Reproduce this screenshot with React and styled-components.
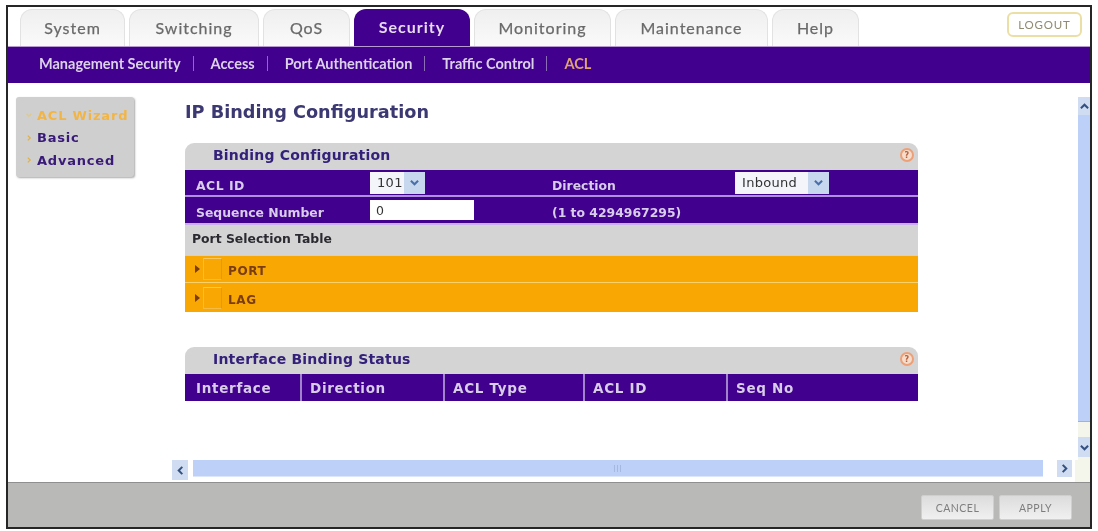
import { Fragment } from 'react';
import styled, { createGlobalStyle } from 'styled-components';

const GlobalStyle = createGlobalStyle`
  html, body {
    margin: 0;
    padding: 0;
    background: #fff;
  }
  * {
    box-sizing: border-box;
  }
`;

const PURPLE = '#42008e';
const tabFont = `Lato, "Open Sans", sans-serif`;
const bodyFont = `"DejaVu Sans", Verdana, sans-serif`;

const Page = styled.div`
  width: 1098px;
  height: 531px;
  padding: 5px 6px 2px 6px;
  filter: blur(0.5px);
`;

const Frame = styled.div`
  height: 100%;
  border: 2px solid #262626;
  display: flex;
  flex-direction: column;
  background: #fff;
`;

const TabBar = styled.div`
  height: 39px;
  padding: 2px 8px 0 12px;
  display: flex;
  align-items: flex-end;
  gap: 4px;
`;

const Tab = styled.div`
  width: ${(p) => p.$width}px;
  height: 37px;
  border-radius: 12px 12px 0 0;
  display: flex;
  align-items: center;
  justify-content: center;
  padding-bottom: 2px;
  font-family: ${tabFont};
  font-size: 16px;
  letter-spacing: 1px;
  font-weight: ${(p) => (p.$active ? 700 : 400)};
  color: ${(p) => (p.$active ? '#e6dcee' : '#6a6a6a')};
  -webkit-text-stroke: ${(p) => (p.$active ? '0' : '0.25px #6a6a6a')};
  background: ${(p) => (p.$active ? PURPLE : 'linear-gradient(#efefef, #fafafa)')};
  border: ${(p) => (p.$active ? 'none' : '1px solid #e2e2e2')};
  border-bottom: none;
`;

const Logout = styled.div`
  margin-left: auto;
  margin-bottom: 9px;
  width: 75px;
  height: 25px;
  border: 2px solid #ecdfa6;
  border-radius: 6px;
  display: flex;
  align-items: center;
  justify-content: center;
  font-family: ${tabFont};
  font-size: 11.5px;
  letter-spacing: 0.8px;
  color: #8f8a70;
`;

const SubNav = styled.div`
  height: 37px;
  background: ${PURPLE};
  border-top: 1px solid #b89ad2;
  padding: 0 0 3px 31px;
  display: flex;
  align-items: center;
  font-family: ${tabFont};
  font-size: 14.5px;
  font-weight: 700;
`;

const SubItem = styled.span`
  color: ${(p) => (p.$active ? '#dfa273' : '#dcd2e8')};
`;

const SubDivider = styled.span`
  width: 1px;
  height: 15px;
  margin: 0 17px 0 12px;
  background: #8d6db5;
`;

const Main = styled.div`
  flex: 1;
  min-height: 0;
  display: flex;
  padding-left: 8px;
`;

const SideMenu = styled.div`
  width: 118px;
  height: 80px;
  margin-top: 14px;
  padding: 8.5px 0 0 10px;
  background: #cfcfcf;
  border-radius: 3px;
  box-shadow: 1px 1px 2px #aaa;
  display: flex;
  flex-direction: column;
  gap: 3.5px;
  font-family: ${bodyFont};
  font-size: 13px;
  font-weight: 700;
  letter-spacing: 0.8px;
`;

const SideItem = styled.div`
  display: flex;
  align-items: center;
  gap: 5px;
  height: 19px;
  white-space: nowrap;
  color: ${(p) => (p.$active ? '#f2b544' : '#3a1a78')};
`;

const Pane = styled.div`
  flex: 1;
  min-width: 0;
  display: flex;
  flex-direction: column;
`;

const PaneBody = styled.div`
  flex: 1;
  min-height: 0;
  display: flex;
`;

const Content = styled.div`
  flex: 1;
  min-width: 0;
  padding: 16px 0 0 51px;
`;

const Title = styled.h1`
  margin: 0 0 17px 0;
  height: 27px;
  font-family: ${bodyFont};
  font-size: 17.7px;
  line-height: 27px;
  font-weight: 700;
  color: #3b3872;
`;

const Panel = styled.section`
  width: 733px;
  margin-bottom: ${(p) => p.$gap || 0}px;
`;

const PanelHead = styled.div`
  height: 27px;
  background: #d4d4d4;
  border-radius: 9px 9px 0 0;
  padding: 0 4px 3px 28px;
  display: flex;
  align-items: center;
  justify-content: space-between;
  font-family: ${bodyFont};
  font-size: 14px;
  font-weight: 700;
  letter-spacing: 0.2px;
  color: #33207a;
`;

const Help = styled.span`
  width: 14px;
  height: 14px;
  border-radius: 50%;
  border: 2px solid #eda077;
  display: flex;
  align-items: center;
  justify-content: center;
  font-family: ${bodyFont};
  font-size: 8px;
  font-weight: 700;
  color: #b8603a;
  background: #f6dccb;
`;

const FormRow = styled.div`
  height: ${(p) => p.$height}px;
  background: ${PURPLE};
  border-top: ${(p) => (p.$divided ? '2px solid #b08fe0' : 'none')};
  display: grid;
  grid-template-columns: 185px 182px 183px 1fr;
  align-items: center;
  font-family: ${bodyFont};
  font-size: 12.4px;
  font-weight: 700;
  color: #d8cde8;
`;

const FieldLabel = styled.span`
  padding-top: 5px;
  padding-left: ${(p) => p.$pad || 0}px;
  letter-spacing: ${(p) => p.$spacing || 0}px;
`;

const SelectBox = styled.div`
  width: ${(p) => p.$width}px;
  height: 22px;
  background: #f3f5fb;
  display: flex;
  align-items: center;
  justify-content: space-between;
  padding-left: 7px;
  font-weight: 400;
  font-size: 13px;
  letter-spacing: 0.3px;
  color: #333;
`;

const SelectArrow = styled.span`
  width: 21px;
  height: 100%;
  display: flex;
  align-items: center;
  justify-content: center;
  background: #c6d7ee;
`;

const SeqInput = styled.input`
  width: 104px;
  height: 20px;
  border: none;
  padding: 0 6px;
  background: #fff;
  font-family: ${bodyFont};
  font-size: 12.5px;
  color: #333;
`;

const SectionLabel = styled.div`
  height: 32px;
  background: #d4d4d4;
  border-top: 2px solid #c9aeea;
  padding: 0 0 3px 7px;
  display: flex;
  align-items: center;
  font-family: ${bodyFont};
  font-size: 12.4px;
  font-weight: 700;
  color: #2a2a30;
`;

const OrangeRow = styled.div`
  height: ${(p) => p.$height}px;
  background: #f9a703;
  border-top: 1px solid #fcd068;
  display: flex;
  align-items: center;
  padding-left: 10px;
  font-family: ${bodyFont};
  font-size: 12px;
  font-weight: 700;
  letter-spacing: 0.6px;
  color: #7a3d12;
`;

const OrangeLabel = styled.span`
  padding-top: 4px;
`;

const Expander = styled.span`
  width: 8px;
  display: flex;
`;

const CheckCell = styled.span`
  width: 19px;
  height: 22px;
  margin-right: 6px;
  border: 1px solid #f6bb45;
  border-top-color: #fbc75e;
  border-right-color: #ea9a00;
`;

const StatusRow = styled.div`
  height: 27px;
  background: ${PURPLE};
  display: grid;
  grid-template-columns: 115px 143px 140px 143px 1fr;
  font-family: ${bodyFont};
  font-size: 13.5px;
  font-weight: 700;
  letter-spacing: 0.7px;
  color: #d8cde8;
`;

const StatusCell = styled.div`
  display: flex;
  align-items: center;
  padding-left: ${(p) => (p.$first ? 11 : 8)}px;
  border-left: ${(p) => (p.$first ? 'none' : '2px solid #a284cc')};
`;

const VScroll = styled.div`
  width: 12px;
  margin-top: 14px;
  padding-bottom: 3px;
  display: flex;
  flex-direction: column;
  background: #f4f6ec;
`;

const VTrack = styled.div`
  flex: 1;
  background: #bdd0f7;
  border-bottom: 1px solid #9fb2d8;
`;

const ScrollBtn = styled.div`
  width: ${(p) => p.$w}px;
  height: ${(p) => p.$h}px;
  margin-top: ${(p) => p.$mt || 0}px;
  flex-shrink: 0;
  display: flex;
  align-items: center;
  justify-content: center;
  background: #cfdcf2;
`;

const HScroll = styled.div`
  height: 22px;
  padding: 0 0 0 38px;
  display: flex;
  align-items: flex-start;
`;

const HTrack = styled.div`
  flex: 1;
  height: 17px;
  margin: 0 14px 0 5px;
  background: #bdd0f7;
  border-bottom: 1px solid #dbe6fb;
  display: flex;
  align-items: center;
  justify-content: center;
`;

const Grip = styled.span`
  width: 9px;
  height: 7px;
  background: repeating-linear-gradient(90deg, #a5b9e0 0 1px, transparent 1px 3px);
`;

const ScrollCorner = styled.span`
  width: 15px;
  height: 22px;
  margin-left: 3px;
  background: #f4f6ec;
`;

const Footer = styled.div`
  height: 45px;
  background: #b9b9b7;
  border-top: 1px solid #8f8f8f;
  padding: 12px 18px 0 0;
  display: flex;
  justify-content: flex-end;
  gap: 5px;
`;

const FootButton = styled.button`
  width: 73px;
  height: 25px;
  border: 1px solid #cfcfcf;
  border-radius: 2px;
  background: linear-gradient(#dcdcdc, #f0f0f0);
  font-family: ${tabFont};
  font-size: 10.5px;
  letter-spacing: 0.5px;
  color: #7d7d7d;
`;

const Chevron = ({ dir = 'down', color = '#33507f', size = 9, stroke = 2.2 }) => {
  const paths = {
    up: 'M1 7 L5 3 L9 7',
    down: 'M1 3 L5 7 L9 3',
    left: 'M7 1 L3 5 L7 9',
    right: 'M3 1 L7 5 L3 9',
  };
  return (
    <svg width={size} height={size} viewBox="0 0 10 10" fill="none">
      <path d={paths[dir]} stroke={color} strokeWidth={stroke} />
    </svg>
  );
};

const Caret = ({ color = '#7a3d12' }) => (
  <svg width="5" height="8" viewBox="0 0 5 8">
    <path d="M0 0 L5 4 L0 8 Z" fill={color} />
  </svg>
);

const tabs = [
  ['System', 105],
  ['Switching', 130],
  ['QoS', 87],
  ['Security', 116],
  ['Monitoring', 137],
  ['Maintenance', 153],
  ['Help', 87],
];

const subLinks = ['Management Security', 'Access', 'Port Authentication', 'Traffic Control'];

const sideLinks = [
  { label: 'ACL Wizard', active: true },
  { label: 'Basic' },
  { label: 'Advanced' },
];

const statusCols = ['Interface', 'Direction', 'ACL Type', 'ACL ID', 'Seq No'];

export default function App() {
  return (
    <>
      <GlobalStyle />
      <Page>
        <Frame>
          <TabBar>
            {tabs.map(([name, width]) => (
              <Tab key={name} $width={width} $active={name === 'Security'}>
                {name}
              </Tab>
            ))}
            <Logout>LOGOUT</Logout>
          </TabBar>

          <SubNav>
            {subLinks.map((link) => (
              <Fragment key={link}>
                <SubItem>{link}</SubItem>
                <SubDivider />
              </Fragment>
            ))}
            <SubItem $active>ACL</SubItem>
          </SubNav>

          <Main>
            <SideMenu>
              {sideLinks.map((item) => (
                <SideItem key={item.label} $active={item.active}>
                  <Chevron
                    dir={item.active ? 'down' : 'right'}
                    color={item.active ? '#e0c98a' : '#e2b24a'}
                    size={6}
                  />
                  {item.label}
                </SideItem>
              ))}
            </SideMenu>

            <Pane>
              <PaneBody>
                <Content>
                  <Title>IP Binding Configuration</Title>

                  <Panel $gap={35}>
                    <PanelHead>
                      Binding Configuration
                      <Help>?</Help>
                    </PanelHead>
                    <FormRow $height={25}>
                      <FieldLabel $pad={11} $spacing={0.5}>ACL ID</FieldLabel>
                      <SelectBox $width={55}>
                        101
                        <SelectArrow>
                          <Chevron color="#4a6fa8" />
                        </SelectArrow>
                      </SelectBox>
                      <FieldLabel>Direction</FieldLabel>
                      <SelectBox $width={94}>
                        Inbound
                        <SelectArrow>
                          <Chevron color="#4a6fa8" />
                        </SelectArrow>
                      </SelectBox>
                    </FormRow>
                    <FormRow $height={28} $divided>
                      <FieldLabel $pad={11}>Sequence Number</FieldLabel>
                      <SeqInput defaultValue="0" />
                      <FieldLabel>(1 to 4294967295)</FieldLabel>
                    </FormRow>
                    <SectionLabel>Port Selection Table</SectionLabel>
                    <OrangeRow $height={27}>
                      <Expander>
                        <Caret />
                      </Expander>
                      <CheckCell />
                      <OrangeLabel>PORT</OrangeLabel>
                    </OrangeRow>
                    <OrangeRow $height={30}>
                      <Expander>
                        <Caret />
                      </Expander>
                      <CheckCell />
                      <OrangeLabel>LAG</OrangeLabel>
                    </OrangeRow>
                  </Panel>

                  <Panel>
                    <PanelHead>
                      Interface Binding Status
                      <Help>?</Help>
                    </PanelHead>
                    <StatusRow>
                      {statusCols.map((col, i) => (
                        <StatusCell key={col} $first={i === 0}>
                          {col}
                        </StatusCell>
                      ))}
                    </StatusRow>
                  </Panel>
                </Content>

                <VScroll>
                  <ScrollBtn $w={12} $h={18}>
                    <Chevron dir="up" />
                  </ScrollBtn>
                  <VTrack />
                  <ScrollBtn $w={12} $h={20} $mt={15}>
                    <Chevron dir="down" />
                  </ScrollBtn>
                </VScroll>
              </PaneBody>

              <HScroll>
                <ScrollBtn $w={16} $h={20}>
                  <Chevron dir="left" />
                </ScrollBtn>
                <HTrack>
                  <Grip />
                </HTrack>
                <ScrollBtn $w={15} $h={17}>
                  <Chevron dir="right" />
                </ScrollBtn>
                <ScrollCorner />
              </HScroll>
            </Pane>
          </Main>

          <Footer>
            <FootButton>CANCEL</FootButton>
            <FootButton>APPLY</FootButton>
          </Footer>
        </Frame>
      </Page>
    </>
  );
}
